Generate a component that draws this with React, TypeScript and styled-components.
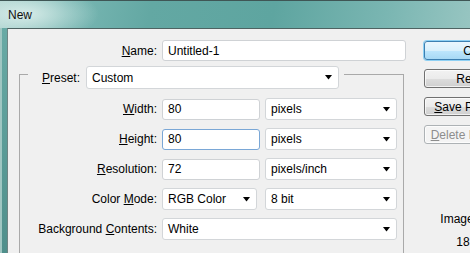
import React from "react";
import styled, { createGlobalStyle } from "styled-components";

const GlobalStyle = createGlobalStyle`
    html, body {
        margin: 0;
        padding: 0;
        background: #5fa6a1;
    }
    body {
        font-family: "Liberation Sans", Arial, sans-serif;
        font-size: 12px;
        color: #000;
    }
`;

function Arrow(): JSX.Element {
    return (
        <svg width="7" height="5" viewBox="0 0 7 5">
            <polygon points="0,0 7,0 3.5,4.5" fill="#000" />
        </svg>
    );
}

type FieldProps = {
    label: React.ReactNode;
    children: React.ReactNode;
    labelWidth: number;
};

function Field({ label, children, labelWidth }: FieldProps): JSX.Element {
    return (
        <Row>
            <Label $w={labelWidth}>{label}</Label>
            {children}
        </Row>
    );
}

type SelectProps = {
    value: string;
    width: number;
    trail?: number;
};

function Select({ value, width, trail = 0 }: SelectProps): JSX.Element {
    return (
        <SelectBox $w={width} $trail={trail}>
            <span>{value}</span>
            <Arrow />
        </SelectBox>
    );
}

export default function App(): JSX.Element {
    return (
        <>
            <GlobalStyle />
            <Window>
                <TitleBar>New</TitleBar>
                <Frame>
                    <SideEdge />
                    <Client>
                        <FormColumn>
                            <Field labelWidth={149} label={<><u>N</u>ame:</>}>
                                <TextBox $w={244}>Untitled-1</TextBox>
                            </Field>

                            <GroupBox>
                                <GroupHeader>
                                    <Label $w={52}><u>P</u>reset:</Label>
                                    <Select value="Custom" width={253} />
                                </GroupHeader>

                                <GroupRows>
                                    <Field labelWidth={137} label={<><u>W</u>idth:</>}>
                                        <TextBox $w={98}>80</TextBox>
                                        <Select value="pixels" width={132} />
                                    </Field>
                                    <Field labelWidth={137} label={<><u>H</u>eight:</>}>
                                        <TextBox $w={98} $focused>80</TextBox>
                                        <Select value="pixels" width={132} />
                                    </Field>
                                    <Field labelWidth={137} label={<><u>R</u>esolution:</>}>
                                        <TextBox $w={98}>72</TextBox>
                                        <Select value="pixels/inch" width={132} />
                                    </Field>
                                    <Field labelWidth={137} label={<>Color <u>M</u>ode:</>}>
                                        <Select value="RGB Color" width={95} trail={3} />
                                        <Select value="8 bit" width={132} />
                                    </Field>
                                    <Field labelWidth={137} label={<>Background <u>C</u>ontents:</>}>
                                        <Select value="White" width={235} />
                                    </Field>
                                </GroupRows>
                            </GroupBox>
                        </FormColumn>

                        <ButtonColumn>
                            <Button $primary>OK</Button>
                            <Button>Reset</Button>
                            <Button><u>S</u>ave Preset...</Button>
                            <Button $disabled><u>D</u>elete Preset...</Button>
                            <Info>
                                <InfoLine>Image Size:</InfoLine>
                                <InfoLine>18.8K</InfoLine>
                            </Info>
                        </ButtonColumn>
                    </Client>
                </Frame>
            </Window>
        </>
    );
}

const Window = styled.div`
    width: 470px;
    height: 253px;
    overflow: hidden;
    display: flex;
    flex-direction: column;
    border-top: 1px solid #3f5655;
    box-sizing: border-box;
`;

const TitleBar = styled.div`
    height: 27px;
    flex-shrink: 0;
    padding-left: 8px;
    display: flex;
    align-items: center;
    font-size: 12px;
    color: #111;
    background:
        radial-gradient(ellipse 75px 28px at 24px 13px, rgba(222, 240, 237, 0.9), rgba(222, 240, 237, 0) 100%),
        linear-gradient(100deg, #a3cdc9 0%, #7ab8b4 14%, #63a8a3 32%, #5ea5a0 58%, #7ab6b2 82%, #97c5c1 100%);
    box-sizing: border-box;
`;

const Frame = styled.div`
    flex: 1;
    display: flex;
    min-height: 0;
`;

const SideEdge = styled.div`
    width: 7px;
    flex-shrink: 0;
    box-sizing: border-box;
    border-left: 2px solid #9fc6c2;
    background: linear-gradient(180deg, #68aaa5 0%, #4f8f8b 100%);
`;

const Client = styled.div`
    flex: 1;
    display: flex;
    background: #f0f0f0;
    border-top: 1px solid #4e6362;
    border-left: 1px solid #6f8584;
`;

const FormColumn = styled.div`
    width: 416px;
    flex-shrink: 0;
    padding-top: 11px;
    display: flex;
    flex-direction: column;
`;

const Row = styled.div`
    display: flex;
    align-items: center;
    gap: 5px;
    height: 22px;
`;

const Label = styled.div<{ $w: number }>`
    width: ${(p) => p.$w}px;
    flex-shrink: 0;
    text-align: right;
    white-space: nowrap;
`;

const TextBox = styled.div<{ $w: number; $focused?: boolean }>`
    width: ${(p) => p.$w}px;
    height: 21px;
    box-sizing: border-box;
    padding-left: 5px;
    display: flex;
    align-items: center;
    background: #fff;
    border: 1px solid ${(p) => (p.$focused ? "#7aa7d6" : "#cfd2d5")};
    border-radius: 3px;
`;

const SelectBox = styled.div<{ $w: number; $trail: number }>`
    width: ${(p) => p.$w}px;
    height: 22px;
    margin-right: ${(p) => p.$trail}px;
    box-sizing: border-box;
    padding: 0 6px 0 5px;
    display: flex;
    align-items: center;
    justify-content: space-between;
    background: #fff;
    border: 1px solid #d3d6d9;
    border-radius: 3px;
    flex-shrink: 0;
`;

const GroupBox = styled.div`
    margin: 13px 0 0 11px;
    width: 385px;
    height: 200px;
    box-sizing: border-box;
    border: 1px solid #a9a9a9;
    flex-shrink: 0;
`;

const GroupHeader = styled.div`
    margin: -9px 0 0 8px;
    width: 316px;
    height: 23px;
    padding-right: 6px;
    box-sizing: border-box;
    display: flex;
    align-items: center;
    gap: 6px;
    background: #f0f0f0;

    ${SelectBox} {
        height: 23px;
    }
`;

const GroupRows = styled.div`
    margin-top: 9px;
    display: flex;
    flex-direction: column;
    gap: 8px;
`;

const ButtonColumn = styled.div`
    width: 96px;
    flex-shrink: 0;
    padding-top: 12px;
    display: flex;
    flex-direction: column;
    gap: 9px;
`;

const Button = styled.div<{ $primary?: boolean; $disabled?: boolean }>`
    height: 19px;
    box-sizing: border-box;
    display: flex;
    align-items: center;
    justify-content: center;
    border-radius: 3px;
    white-space: nowrap;
    border: 1px solid ${(p) => (p.$primary ? "#3c7fb1" : p.$disabled ? "#adb2b5" : "#707070")};
    color: ${(p) => (p.$disabled ? "#8d8d8d" : "#000")};
    background: ${(p) =>
        p.$primary
            ? "linear-gradient(180deg, #eaf6fd 0%, #d9f0fc 50%, #bee6fd 51%, #a7d9f5 100%)"
            : p.$disabled
            ? "#f4f4f4"
            : "linear-gradient(180deg, #f2f2f2 0%, #ebebeb 50%, #dddddd 51%, #cfcfcf 100%)"};
    box-shadow: ${(p) => (p.$primary ? "0 0 0 1px #8fd0f3" : "inset 0 0 0 1px rgba(255,255,255,0.7)")};
`;

const Info = styled.div`
    margin-top: 59px;
    display: flex;
    flex-direction: column;
    align-items: center;
    gap: 9px;
`;

const InfoLine = styled.div`
    line-height: 14px;
`;
